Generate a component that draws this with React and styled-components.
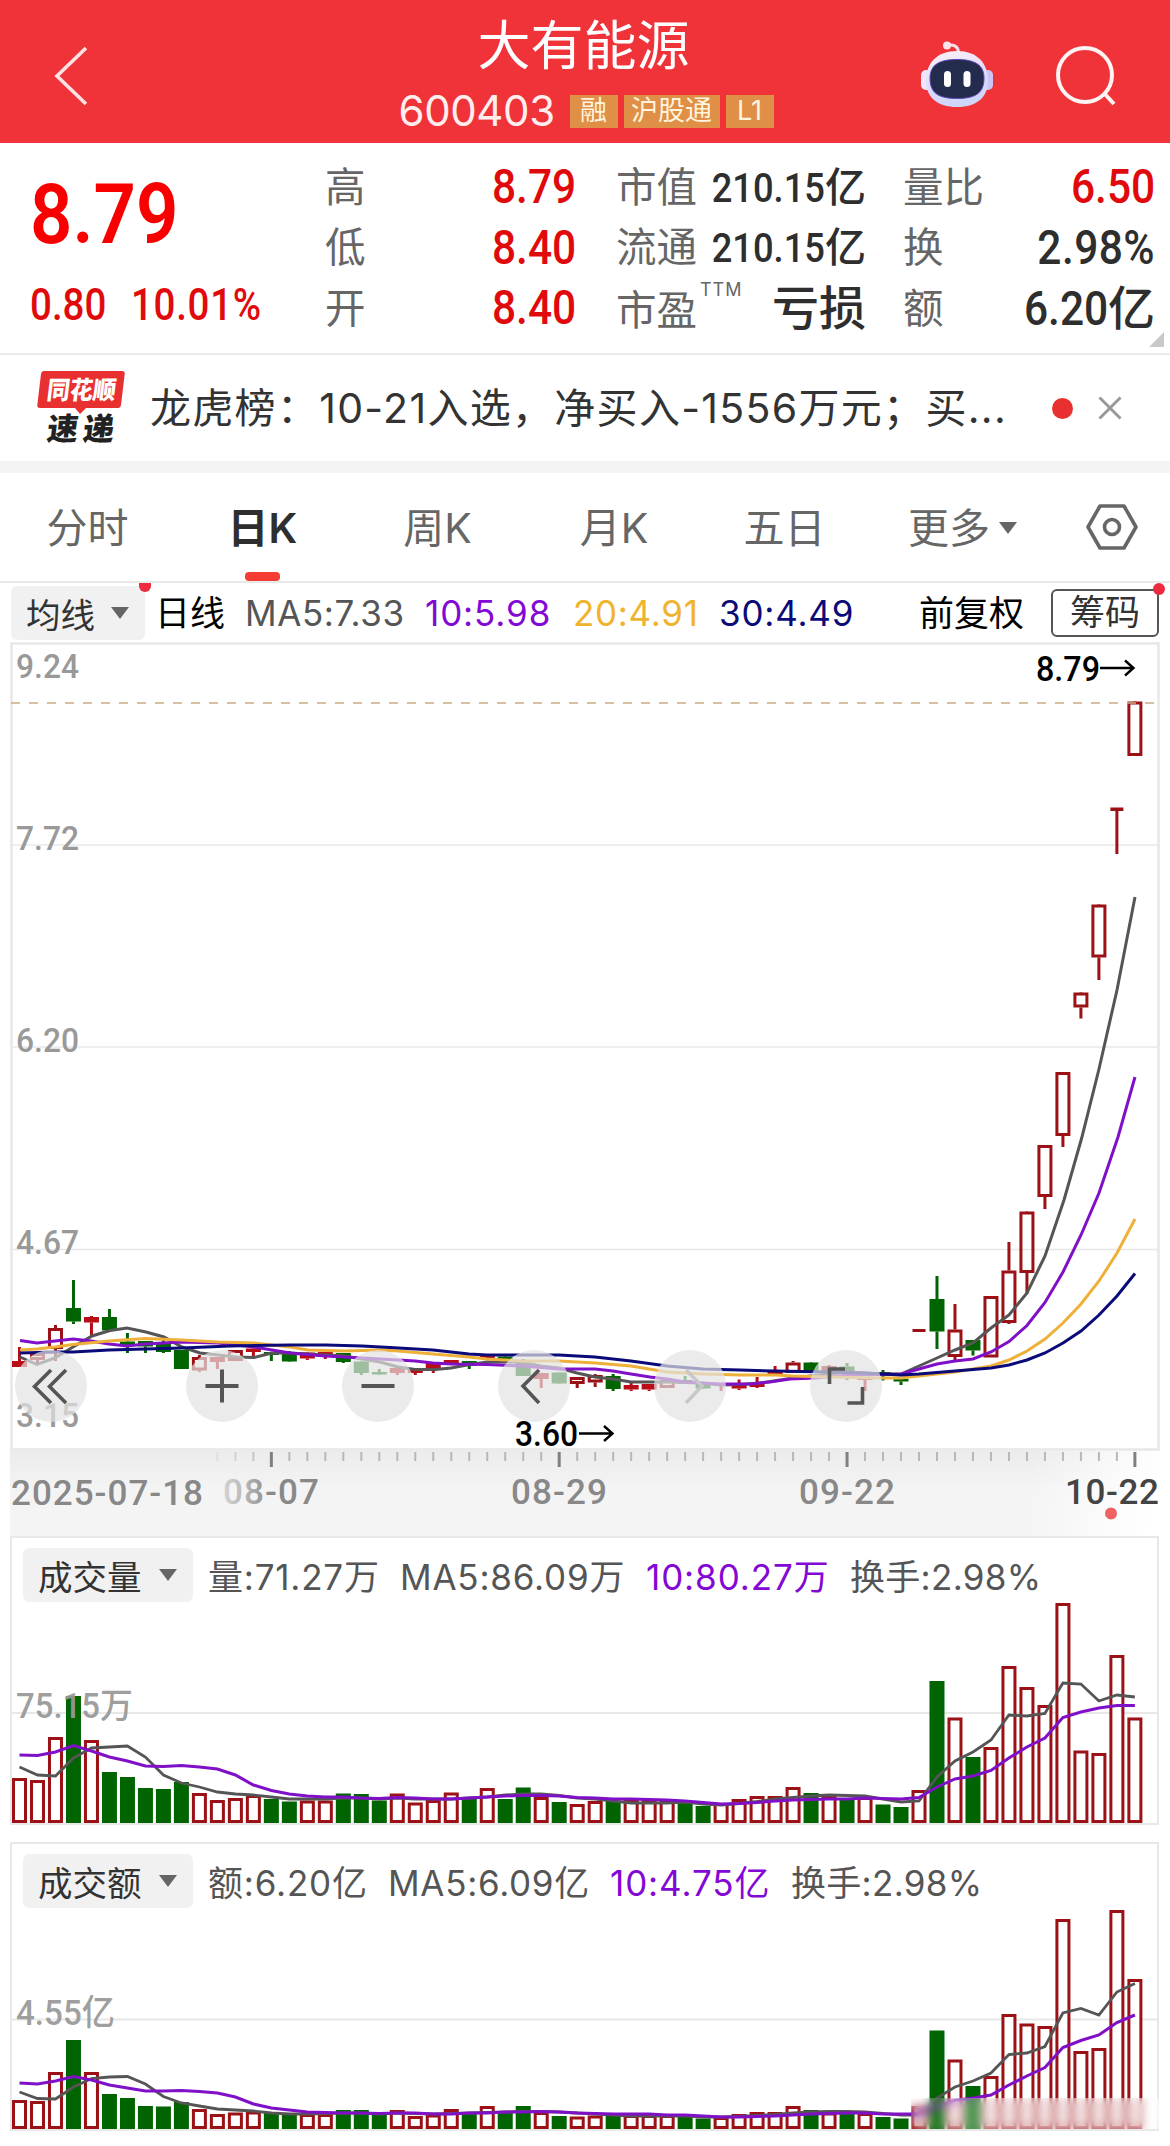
import React from "react";
import styled, { createGlobalStyle } from "styled-components";

const GlobalStyle = createGlobalStyle`
  body {
    margin: 0;
    background: #fff;
    font-family: Inter, "Noto Sans CJK SC", sans-serif;
    color: #333;
  }

  * {
    box-sizing: border-box;
  }
`;

const Page = styled.div`
  width: 1170px;
  height: 2146px;
  overflow: hidden;
  background: #fff;
`;

/* header */

const Header = styled.header`
  display: grid;
  grid-template-columns: 1fr auto 1fr;
  height: 143px;
  background: #f03239;
  color: #fff;
`;

const BackButton = styled.div`
  padding: 45px 0 0 53px;
`;

const TitleBlock = styled.div`
  display: flex;
  flex-direction: column;
  align-items: center;
`;

const Title = styled.h1`
  margin: 12px 3px 0 0;
  font-size: 53px;
  line-height: 68px;
  font-weight: 400;
`;

const CodeRow = styled.div`
  display: flex;
  align-items: center;
  gap: 6px;
  height: 34px;
  margin: 14px 0 0 2px;
`;

const Code = styled.span`
  width: 165px;
  font-size: 42px;
  line-height: 34px;
  letter-spacing: -0.4px;
  color: #ffeeee;
`;

const Tag = styled.span`
  width: ${(props) => props.w}px;
  height: 33px;
  background: #e08f47;
  color: #fff4dd;
  font-size: 27px;
  line-height: 32px;
  text-align: center;
`;

const HeaderIcons = styled.div`
  display: flex;
  justify-content: flex-end;
  gap: 63px;
  padding: 41px 52px 0 0;
`;

/* quote */

const Quote = styled.section`
  position: relative;
  display: flex;
  height: 212px;
  padding: 14px 15px 0 30px;
  border-bottom: 2px solid #ebebeb;
`;

const Num = styled.span`
  display: inline-block;
  font-family: Roboto, "Noto Sans CJK SC", sans-serif;
  font-weight: ${(props) => props.weight || 500};
  font-size: ${(props) => props.size || 48}px;
  letter-spacing: ${(props) => props.track || 0}px;
  transform: scaleX(0.885);
  transform-origin: ${(props) => props.origin || "right"} center;
`;

const PriceBlock = styled.div`
  width: 295px;
  color: #ee0505;
`;

const BigPrice = styled.div`
  margin-top: 14px;
  height: 88px;
  line-height: 88px;
  color: #f90000;
`;

const Change = styled.div`
  display: flex;
  margin-top: 15px;
  line-height: 64px;
  color: #e00a0c;
`;

const ChangeAmount = styled.span`
  width: 101px;
`;

const QuoteCol = styled.div`
  width: ${(props) => props.w}px;
  margin-right: ${(props) => props.gap || 0}px;
`;

const QuoteRow = styled.div`
  display: flex;
  align-items: center;
  justify-content: space-between;
  height: 60.5px;
`;

const Label = styled.span`
  position: relative;
  padding-top: ${(props) => props.drop || 1}px;
  font-size: 40.5px;
  line-height: 60px;
  color: #666;
`;

const Ttm = styled.sup`
  position: absolute;
  left: 84px;
  top: 4px;
  font-size: 18px;
  line-height: 22px;
  letter-spacing: 1px;
`;

const Value = styled.span`
  display: flex;
  align-items: baseline;
  line-height: 60px;
  color: ${(props) => (props.up ? "#e00a0c" : "#2e2e2e")};
`;

const Unit = styled.span`
  font-size: ${(props) => props.size}px;
  font-weight: 500;
  line-height: 60px;
`;

const Corner = styled.i`
  position: absolute;
  right: 6px;
  bottom: 6px;
  border-left: 15px solid transparent;
  border-bottom: 15px solid #c9c9c9;
`;

/* news */

const News = styled.section`
  display: flex;
  align-items: center;
  height: 106px;
  padding-left: 36px;
`;

const NewsText = styled.p`
  width: 902px;
  margin: 0 0 0 24px;
  font-size: 41px;
  line-height: 60px;
  letter-spacing: 1.3px;
  color: #333;
  white-space: nowrap;
`;

const RedDot = styled.i`
  width: 21px;
  height: 21px;
  margin-right: 25px;
  border-radius: 50%;
  background: #e93030;
`;

const Gap = styled.div`
  height: 12px;
  background: #f4f4f4;
`;

/* tabs */

const Tabs = styled.nav`
  display: flex;
  height: 110px;
  padding-left: 15px;
  border-bottom: 2px solid #e9e9e9;
`;

const Tab = styled.div`
  display: flex;
  flex-direction: column;
  align-items: center;
  width: ${(props) => props.w}px;
  padding-top: 25px;
  font-size: 41px;
  line-height: 60px;
  font-weight: ${(props) => (props.active ? 600 : 400)};
  color: ${(props) => (props.active ? "#2e2e2e" : "#666")};
`;

const Underline = styled.i`
  width: 35px;
  height: 9px;
  margin-top: 14px;
  border-radius: 4px;
  background: #f53d33;
`;

const MoreTab = styled.div`
  display: flex;
  align-items: center;
  gap: 9px;
  width: 177px;
  height: 60px;
  margin: 25px 0 0 57px;
  font-size: 41px;
  line-height: 60px;
  color: #666;
`;

const Caret = styled.i`
  border-left: 9px solid transparent;
  border-right: 9px solid transparent;
  border-top: 12px solid #666;
`;

const SettingIcon = styled.svg`
  margin-top: 30px;
`;

/* legends */

const LegendRow = styled.div`
  display: flex;
  align-items: center;
  height: ${(props) => props.h}px;
  padding: ${(props) => props.top || 0}px 0 0 11px;
`;

const Pill = styled.div`
  position: relative;
  display: flex;
  align-items: center;
  justify-content: space-between;
  flex: none;
  width: ${(props) => props.w}px;
  height: 54px;
  margin-right: ${(props) => props.gap}px;
  padding: 0 16px 0 15px;
  border-radius: 6px;
  background: #f1f1f1;
  font-size: 34.5px;
  color: #333;
`;

const PillDot = styled.i`
  position: absolute;
  right: ${(props) => props.right}px;
  top: ${(props) => props.top}px;
  width: 12px;
  height: ${(props) => props.h || 12}px;
  border-radius: ${(props) => (props.h ? "0 0 6px 6px" : "6px")};
  background: #ee2a40;
`;

const Legend = styled.span`
  flex: none;
  width: ${(props) => props.w}px;
  padding-top: ${(props) => props.drop || 0}px;
  font-size: 35px;
  line-height: 50px;
  letter-spacing: ${(props) => props.track || 0}px;
  color: ${(props) => props.color || "#555"};
  white-space: nowrap;
`;

const ChipButton = styled.div`
  position: relative;
  width: 108px;
  height: 48px;
  border: 2px solid #555;
  border-radius: 6px;
  font-size: 35px;
  line-height: 43px;
  text-align: center;
  color: #333;
`;

/* charts */

const ChartArea = styled.div`
  position: relative;
  width: 1150px;
  height: 809px;
  margin-left: 10px;
`;

const Plot = styled.svg`
  display: block;
  overflow: visible;
`;

const RoundButton = styled.div`
  position: absolute;
  left: ${(props) => props.x}px;
  top: 708px;
  width: 72px;
  height: 72px;
  border-radius: 50%;
  background: rgba(226, 226, 226, 0.7);

  svg {
    display: block;
  }
`;

const Axis = styled.div`
  height: 85px;
  margin-left: 10px;
  width: 1150px;
  background: linear-gradient(100deg, rgba(255, 255, 255, 0) 88%, #fff 99%),
    linear-gradient(#ececec, #f4f4f4 45%);
`;

const Panel = styled.section`
  position: relative;
  width: 1149px;
  height: 289px;
  margin: 0 0 17px 10px;
  border: 2px solid #e8e8e8;
`;

const Watermark = styled.div`
  position: absolute;
  right: -2px;
  bottom: 0;
  width: 248px;
  height: 31px;
  background: linear-gradient(90deg, rgba(255, 255, 255, 0), rgba(255, 255, 255, 0.3) 25%);
  backdrop-filter: blur(4px);
`;

const FONT = 'Roboto, "Noto Sans CJK SC", sans-serif';
const RED = "#9c1116";
const GREEN = "#006400";
const GRAY = "#555";
const PURPLE = "#8010c8";
const ORANGE = "#efb03a";
const NAVY = "#0a0a78";

const STEP = 17.99;
const xAt = (i) => 19.5 + i * STEP;

// kind, body top, body bottom, high, low
const candles = [
  ["s", 1361, 1367, 1347, 1367], ["r", 1353, 1360, 1352, 1363], ["r", 1328, 1349, 1325, 1361],
  ["g", 1308, 1321.5, 1280, 1324], ["s", 1317, 1322.5, 1316, 1337], ["g", 1317, 1330.5, 1309, 1331],
  ["g", 1341.5, 1346, 1333, 1353], ["g", 1341, 1346.5, 1341, 1353], ["g", 1343, 1352, 1340, 1353],
  ["g", 1350, 1369, 1350, 1369], ["r", 1357, 1370.5, 1355, 1372], ["s", 1357, 1362, 1357, 1369],
  ["r", 1350, 1361, 1350, 1361], ["s", 1348.5, 1352, 1348, 1357], ["g", 1352, 1355, 1352, 1361],
  ["g", 1352, 1361.5, 1351, 1362], ["s", 1352.5, 1358.5, 1352, 1360], ["s", 1352, 1357, 1352, 1359],
  ["g", 1353, 1362, 1353, 1363], ["g", 1361.5, 1373, 1361, 1375], ["g", 1372, 1374.5, 1369, 1375],
  ["s", 1368, 1373, 1366, 1375], ["s", 1368, 1373, 1368, 1375], ["s", 1363, 1368, 1363, 1373],
  ["s", 1360, 1364, 1360, 1364], ["g", 1361, 1366, 1361, 1369], ["s", 1355, 1359, 1355, 1359],
  ["g", 1356.5, 1360, 1356, 1360], ["g", 1363, 1376, 1359, 1376], ["s", 1373, 1379, 1373, 1388],
  ["g", 1372.5, 1383.5, 1372, 1384], ["r", 1377, 1384, 1377, 1388], ["r", 1375, 1382.5, 1374, 1387],
  ["g", 1376, 1389, 1374, 1391], ["s", 1385, 1389.5, 1382, 1391], ["s", 1384, 1389.5, 1384, 1391],
  ["r", 1380, 1388, 1380, 1388], ["g", 1380, 1384, 1376, 1384], ["g", 1384, 1388.5, 1384, 1389],
  ["s", 1383, 1386, 1383, 1391], ["s", 1385, 1388.5, 1379.5, 1390], ["s", 1384, 1387, 1377, 1388],
  ["s", 1372, 1374.5, 1366, 1375], ["r", 1362.5, 1373, 1361, 1373], ["g", 1362.5, 1372, 1362, 1372],
  ["r", 1366, 1372, 1365, 1372], ["g", 1366.5, 1372, 1363, 1380], ["s", 1377, 1380, 1377, 1391],
  ["g", 1372, 1376, 1370, 1380.5], ["g", 1379, 1381.5, 1379, 1385], ["d", 1329, 1332, 1329, 1332],
  ["g", 1299, 1331.5, 1276, 1349], ["r", 1329.5, 1357, 1304, 1362], ["g", 1340, 1350.5, 1340, 1355.5],
  ["r", 1296, 1357.5, 1296, 1357], ["r", 1270.5, 1323, 1242, 1324], ["r", 1211.5, 1273, 1211, 1294],
  ["r", 1145, 1197, 1145, 1209], ["r", 1072, 1136, 1072, 1147], ["r", 992.5, 1007.5, 992, 1018.5],
  ["r", 904.5, 957.5, 904, 980], ["d", 807.5, 811, 808, 854], ["r", 701.5, 756, 701, 756],
];

const priceMa = [
  {
    color: GRAY,
    points:
      "20,1357 37,1364.5 55,1358 73,1347 92,1336 110,1330.5 127,1328 146,1332 164,1337 182,1347 200,1353 218,1355 236,1357 254,1357.5 272,1353 290,1353 326,1355 344,1356 362,1359 380,1362 398,1367 415,1369.5 435,1369.5 451,1368 470,1364.5 487,1362 520,1362 541,1366 559,1368 577,1373 595,1377 613,1379 631,1382 670,1382 700,1383 720,1385 740,1384.5 760,1383 780,1380 793,1378 820,1375 847,1372 883,1374 901,1374 919,1366 937,1358 955,1350 973,1343 991,1328 1009,1315 1027,1293 1045,1256 1064,1200 1081.7,1138 1099,1069 1117,990 1135,897",
  },
  {
    color: PURPLE,
    points:
      "20,1340.5 37,1343 55,1341 73,1339 91,1341 109,1344 127,1346 145,1344 163,1343 182,1342 218,1343 254,1347 272,1350 290,1353 325,1356 344,1357 362,1358 398,1360 415,1361 433,1363 451,1364 487,1364.5 523,1366 559,1369 595,1369 613,1371 631,1374 650,1377 667,1379 685,1382 720,1384 750,1384 770,1382 790,1379 815,1378 850,1375 901,1374 919,1369 937,1364 955,1361 973,1359 991,1352 1009,1341.5 1027,1325.5 1045,1302.5 1063,1272 1081,1235 1099,1193 1118,1137 1135,1077",
  },
  {
    color: ORANGE,
    points:
      "20,1350 37,1349 55,1347 73,1344.5 109,1341 145,1338.5 182,1340 218,1342 254,1343 290,1347 308,1350 344,1351 380,1350 398,1351 433,1354 469,1357 487,1359 523,1361 559,1361 595,1363 631,1366 667,1372 703,1374 740,1375 775,1375 793,1376 829,1377 883,1378 901,1378 919,1376 955,1372 973,1369 991,1366 1009,1360 1027,1351 1045,1339 1063,1323 1081,1304 1099,1281 1117,1253 1135,1219",
  },
  {
    color: NAVY,
    points:
      "20,1353 55,1352 73,1352 109,1350 145,1349 182,1348 230,1346 290,1345 326,1345 362,1346 390,1347.5 433,1350 469,1354 487,1355 559,1355 595,1357 631,1361 667,1366 703,1369 740,1370 775,1371 829,1372 865,1373 901,1375 919,1374 955,1371 991,1368 1009,1365 1027,1360 1045,1353 1063,1343 1081,1331 1099,1315 1117,1296 1135,1273.5",
  },
];

// r = hollow red bar, g = filled green bar
const barKinds = "rrrgrgggggrrrrggrrgggrrrrgrggrgrrgrrrggrrrrrgrgrggrgrgrrrrrrrrr";

const volume = {
  bottom: 1823,
  tops: [
    1778, 1780, 1737, 1696, 1740, 1772, 1777, 1788, 1789, 1782, 1793, 1800, 1798, 1795, 1799, 1801.5,
    1800.5, 1800.5, 1793.5, 1794, 1800.5, 1793.5, 1802.5, 1800, 1792.5, 1799, 1788, 1799, 1787.5, 1797,
    1802, 1804, 1801, 1801, 1799, 1799, 1801, 1801, 1806, 1803, 1799, 1796, 1796, 1787, 1793, 1796,
    1800, 1797, 1804.5, 1807, 1790, 1681, 1717.5, 1757, 1747, 1666, 1687, 1705, 1603, 1750.5, 1753,
    1655, 1717.5,
  ],
  ma5: [
    1767, 1775, 1776, 1758, 1748, 1747, 1746, 1757, 1775, 1783, 1787, 1792, 1794, 1795, 1797, 1799,
    1799, 1799, 1798, 1798, 1799, 1798, 1799, 1799, 1799, 1798, 1797, 1795, 1794, 1794, 1795.5, 1798,
    1799, 1801, 1803, 1803, 1803, 1802, 1804, 1805, 1803.5, 1801.5, 1799, 1797.5, 1796, 1795, 1795.5,
    1796, 1799, 1802, 1801, 1777, 1761, 1752, 1740, 1715, 1716, 1713.5, 1683, 1684, 1701, 1695, 1697,
  ],
  ma10: [
    1755, 1755.5, 1752, 1745.5, 1751, 1757, 1761, 1766, 1766.5, 1765.5, 1767, 1769, 1775, 1785, 1790.5,
    1794, 1796, 1797, 1797, 1798, 1798.5, 1797.5, 1798, 1799, 1799, 1798, 1797, 1796, 1795.5, 1795.5,
    1796, 1797.5, 1798, 1799, 1799, 1799.5, 1800, 1801, 1802.5, 1804, 1803.5, 1802.5, 1801, 1800,
    1799.5, 1799, 1799, 1798, 1798.5, 1799, 1797.5, 1787, 1779, 1776, 1770.5, 1758, 1747, 1738, 1717.5,
    1712, 1708, 1705.5, 1705.5,
  ],
};

const amount = {
  bottom: 2129,
  tops: [
    2100, 2101, 2072, 2040, 2072, 2094, 2098, 2106, 2106.5, 2102, 2109, 2114, 2112.5, 2111.5, 2113,
    2114.5, 2114, 2114, 2110, 2110, 2114, 2110, 2116, 2114.5, 2109, 2113.5, 2106, 2112.5, 2106, 2112,
    2116, 2116.5, 2115.5, 2115.5, 2115, 2115, 2115, 2116, 2118.5, 2117, 2114, 2112, 2112, 2106, 2110,
    2112.5, 2114, 2113, 2117, 2118.5, 2106, 2030.5, 2059.5, 2086, 2076, 2014, 2023.5, 2026, 1919, 2051,
    2048, 1910, 1979,
  ],
  ma5: [
    2092, 2098.5, 2099, 2087, 2078.5, 2077, 2076.5, 2084, 2096.5, 2103, 2106, 2109, 2110, 2111, 2113,
    2114, 2114, 2113.5, 2113, 2113, 2114, 2113, 2113.5, 2114, 2113.5, 2113, 2112.5, 2112, 2111.5,
    2111.5, 2112, 2113, 2114, 2115, 2116, 2116, 2116, 2116, 2117, 2117, 2116.5, 2115.5, 2114.5, 2113,
    2112, 2111.5, 2111.5, 2112, 2113.5, 2115, 2115, 2098, 2087, 2081, 2073, 2054.5, 2053, 2046.5, 2013,
    2008.5, 2015, 1992, 1983.5,
  ],
  ma10: [
    2083, 2084, 2081, 2076.5, 2080, 2085, 2088, 2091, 2091, 2090.5, 2091.5, 2093, 2097, 2104, 2108,
    2110, 2112, 2112.5, 2113, 2113, 2113.5, 2113, 2113, 2114, 2114, 2113, 2113, 2112, 2112, 2111.5,
    2112, 2113, 2113.5, 2114, 2114, 2114, 2115, 2115, 2116, 2117, 2117, 2116.5, 2116, 2115, 2114,
    2113.5, 2113, 2113, 2114, 2114, 2114, 2107, 2100.5, 2098, 2095, 2085, 2076, 2067.5, 2047.5, 2040.5,
    2035, 2022.5, 2015,
  ],
};

const toPoints = (ys) => ys.map((y, i) => `${xAt(i).toFixed(1)},${y}`).join(" ");

function Candle({ x, kind, top, bottom, high, low }) {
  if (kind === "d") {
    return (
      <g fill={RED}>
        <rect x={x - 6.5} y={top} width="13" height={bottom - top} />
        <rect x={x - 1.5} y={high} width="3" height={low - high} />
      </g>
    );
  }
  const color = kind === "g" ? GREEN : kind === "s" ? "#b80c16" : RED;
  return (
    <g fill={color}>
      <rect x={x - 1.5} y={high} width="3" height={Math.max(top - high, 0)} />
      <rect x={x - 1.5} y={bottom} width="3" height={Math.max(low - bottom, 0)} />
      {kind === "r" ? (
        <rect
          x={x - 6}
          y={top + 1.5}
          width="12"
          height={bottom - top - 3}
          fill="none"
          stroke={color}
          strokeWidth="3"
        />
      ) : (
        <rect x={x - 7.5} y={top} width="15" height={bottom - top} />
      )}
    </g>
  );
}

function Bars({ data, top, mid, label, labelWidth, height }) {
  return (
    <Plot width="1149" height={height} viewBox={`12 ${top} 1149 ${height}`}>
      <line x1="11" x2="1158" y1={mid} y2={mid} stroke="#e8e8e8" strokeWidth="2" />
      {data.tops.map((y, i) =>
        barKinds[i] === "g" ? (
          <rect key={i} x={xAt(i) - 7.5} y={y} width="15" height={data.bottom - y} fill={GREEN} />
        ) : (
          <rect
            key={i}
            x={xAt(i) - 6}
            y={y + 1.5}
            width="12"
            height={data.bottom - y - 3}
            fill="#fff"
            stroke={RED}
            strokeWidth="3"
          />
        )
      )}
      <text
        x="16"
        y={mid + 5}
        fontFamily={FONT}
        fontSize="35"
        fontWeight="500"
        fill="#999"
        fillOpacity="0.95"
        textLength={labelWidth}
        lengthAdjust="spacingAndGlyphs"
      >
        {label}
      </text>
      <polyline points={toPoints(data.ma5)} fill="none" stroke={GRAY} strokeWidth="2.8" />
      <polyline points={toPoints(data.ma10)} fill="none" stroke={PURPLE} strokeWidth="3" />
    </Plot>
  );
}

const priceLabels = [
  ["9.24", 678],
  ["7.72", 849.5],
  ["6.20", 1052],
  ["4.67", 1254],
  ["3.15", 1426.5],
];

function PriceChart() {
  return (
    <ChartArea>
      <Plot width="1150" height="809" viewBox="10 642 1150 809">
        <rect x="11.5" y="643.5" width="1147" height="806" fill="none" stroke="#e8e8e8" strokeWidth="2.6" />
        {[845, 1047, 1249.5].map((y) => (
          <line key={y} x1="11" x2="1158" y1={y} y2={y} stroke="#e8e8e8" strokeWidth="1.6" />
        ))}
        {priceLabels.map(([label, y]) => (
          <text
            key={label}
            x="16"
            y={y}
            fontFamily={FONT}
            fontSize="34"
            fontWeight="500"
            fill="#999"
            textLength="63"
            lengthAdjust="spacingAndGlyphs"
          >
            {label}
          </text>
        ))}
        {candles.map(([kind, top, bottom, high, low], i) => (
          <Candle key={i} x={xAt(i)} kind={kind} top={top} bottom={bottom} high={high} low={low} />
        ))}
        <line x1="11" x2="1154" y1="703" y2="703" stroke="#c9ac82" strokeWidth="1.6" strokeDasharray="9 9" />
        {priceMa.map((line) => (
          <polyline key={line.color} points={line.points} fill="none" stroke={line.color} strokeWidth="3" />
        ))}
        <g fontFamily={FONT} fontSize="35" fontWeight="500" fill="#000">
          <text x="1036" y="681" textLength="64" lengthAdjust="spacingAndGlyphs">8.79</text>
          <text x="515" y="1446" textLength="63" lengthAdjust="spacingAndGlyphs">3.60</text>
        </g>
        <g fill="none" stroke="#000" strokeWidth="2.4">
          <path d="M1100 668h33M1125 660.5l8.500 7.500-8.500 7.500" />
          <path d="M579 1433.500h33M604 1426l8.500 7.500-8.500 7.500" />
        </g>
      </Plot>
      <RoundButton x={5}>
        <svg width="72" height="72" fill="none" stroke="#555" strokeWidth="3.6">
          <path d="M36 20L19.500 36.500L36 53M51 20L34.500 36.500L51 53" />
        </svg>
      </RoundButton>
      <RoundButton x={176}>
        <svg width="72" height="72" fill="none" stroke="#555" strokeWidth="4">
          <path d="M36 19.500v33M19.500 36h33" />
        </svg>
      </RoundButton>
      <RoundButton x={332}>
        <svg width="72" height="72" fill="none" stroke="#555" strokeWidth="4">
          <path d="M19.500 36h33" />
        </svg>
      </RoundButton>
      <RoundButton x={488}>
        <svg width="72" height="72" fill="none" stroke="#555" strokeWidth="3.6">
          <path d="M41 20L25 36L41 53" />
        </svg>
      </RoundButton>
      <RoundButton x={644}>
        <svg width="72" height="72" fill="none" stroke="#c8c8c8" strokeWidth="3.6">
          <path d="M32 20L48 36L32 53" />
        </svg>
      </RoundButton>
      <RoundButton x={800}>
        <svg width="72" height="72" fill="none" stroke="#555" strokeWidth="3.6">
          <path d="M35 19H19.500V34M37.500 53H52.500V37" />
        </svg>
      </RoundButton>
    </ChartArea>
  );
}

function DateAxis() {
  const ticks = [];
  for (let i = 11; i <= 62; i++) {
    const major = [14, 30, 46, 62].includes(i);
    const opacity = i < 14 ? (i - 10) * 0.25 : 1;
    ticks.push(
      <rect
        key={i}
        x={xAt(i) - (major ? 1.5 : 1)}
        y="1452"
        width={major ? 3 : 2}
        height={major ? 15 : 9}
        fill={major ? "#808080" : "#b8b8b8"}
        opacity={opacity}
      />
    );
  }
  return (
    <Axis>
      <Plot width="1150" height="85" viewBox="10 1451 1150 85">
        <defs>
          <linearGradient id="fade">
            <stop offset="0" stopColor="#888" stopOpacity="0.3" />
            <stop offset="0.25" stopColor="#888" stopOpacity="0.6" />
            <stop offset="0.5" stopColor="#888" />
          </linearGradient>
        </defs>
        {ticks}
        <g fontFamily={FONT} fontSize="35" fontWeight="500" fill="#888">
          <text x="11" y="1505" textLength="192">2025-07-18</text>
          <text x="223" y="1504" textLength="96" fill="url(#fade)">08-07</text>
          <text x="511" y="1504" textLength="96">08-29</text>
          <text x="799" y="1504" textLength="96">09-22</text>
          <text x="1065" y="1504" textLength="94" fill="#444">10-22</text>
        </g>
        <circle cx="1111" cy="1513.500" r="6" fill="#f06262" />
      </Plot>
    </Axis>
  );
}

function RobotIcon() {
  return (
    <svg width="72" height="66" viewBox="0 0 72 66">
      <defs>
        <linearGradient id="shell" x1="0" y1="0" x2="0.3" y2="1">
          <stop offset="0" stopColor="#fdf3f8" />
          <stop offset="0.55" stopColor="#e3dcfa" />
          <stop offset="1" stopColor="#cfd6fb" />
        </linearGradient>
      </defs>
      <path d="M26 4.500C32 3 37 5 37.500 11" fill="none" stroke="#f6dfe8" strokeWidth="3" />
      <circle cx="26" cy="4.500" r="4" fill="#fbe6ee" />
      <rect x="0" y="29" width="12" height="20" rx="5" fill="#efe6fb" />
      <rect x="60" y="29" width="12" height="20" rx="5" fill="#c9c6f6" />
      <path d="M36 10C56 10 67 22 67 40C67 56 56 66 36 66C16 66 5 56 5 40C5 22 16 10 36 10Z" fill="url(#shell)" />
      <path
        d="M36 18.500C54 18.500 63 24 63 37C63 51 56 57.500 36 57.500C16 57.500 9 51 9 37C9 24 18 18.500 36 18.500Z"
        fill="#242c4d"
        stroke="#5a48b8"
        strokeWidth="1"
      />
      <rect x="23" y="30" width="7" height="16" rx="3.500" fill="#fff" />
      <rect x="42.500" y="30" width="7" height="16" rx="3.500" fill="#fff" />
    </svg>
  );
}

function NewsLogo() {
  return (
    <Plot width="90" height="76" viewBox="36 370 90 76">
      <path d="M44 371H122Q125 371 124.700 374L121 405Q120.500 408 118 408H86L80 414L75 408H40Q37 408 37.300 405L41 374Q41.500 371 44 371Z" fill="#e93030" />
      <g fontFamily='"Noto Sans CJK SC", sans-serif' fontWeight="900">
        <text transform="translate(46 399) skewX(-7)" fontSize="25" fill="#fff" textLength="69" lengthAdjust="spacingAndGlyphs">
          同花顺
        </text>
        <text transform="translate(46 440) skewX(-7)" fontSize="31" fill="#222" textLength="67">
          速递
        </text>
      </g>
    </Plot>
  );
}

export default function App() {
  return (
    <Page>
      <GlobalStyle />
      <Header>
        <BackButton>
          <svg width="36" height="62" fill="none" stroke="#ffe3e3" strokeWidth="3.6">
            <path d="M33 3L4 31L33 59" />
          </svg>
        </BackButton>
        <TitleBlock>
          <Title>大有能源</Title>
          <CodeRow>
            <Code>600403</Code>
            <Tag w={48}>融</Tag>
            <Tag w={96}>沪股通</Tag>
            <Tag w={48}>L1</Tag>
          </CodeRow>
        </TitleBlock>
        <HeaderIcons>
          <RobotIcon />
          <svg width="62" height="66" fill="none" stroke="#fff3f3" strokeWidth="4">
            <circle cx="29" cy="34" r="27" />
            <path d="M48 52L58 63" />
          </svg>
        </HeaderIcons>
      </Header>

      <Quote>
        <PriceBlock>
          <BigPrice>
            <Num size={84} weight={600} origin="left">8.79</Num>
          </BigPrice>
          <Change>
            <ChangeAmount>
              <Num size={43.5} origin="left">0.80</Num>
            </ChangeAmount>
            <Num size={43.5} track={0.8} origin="left">10.01%</Num>
          </Change>
        </PriceBlock>
        <QuoteCol w={251} gap={40}>
          <QuoteRow>
            <Label>高</Label>
            <Value up><Num>8.79</Num></Value>
          </QuoteRow>
          <QuoteRow>
            <Label>低</Label>
            <Value up><Num>8.40</Num></Value>
          </QuoteRow>
          <QuoteRow>
            <Label>开</Label>
            <Value up><Num>8.40</Num></Value>
          </QuoteRow>
        </QuoteCol>
        <QuoteCol w={250} gap={37}>
          <QuoteRow>
            <Label>市值</Label>
            <Value><Num size={41}>210.15</Num><Unit size={41}>亿</Unit></Value>
          </QuoteRow>
          <QuoteRow>
            <Label>流通</Label>
            <Value><Num size={41}>210.15</Num><Unit size={41}>亿</Unit></Value>
          </QuoteRow>
          <QuoteRow>
            <Label drop={6}>市盈<Ttm>TTM</Ttm></Label>
            <Value><Unit size={47}>亏损</Unit></Value>
          </QuoteRow>
        </QuoteCol>
        <QuoteCol w={252}>
          <QuoteRow>
            <Label>量比</Label>
            <Value up><Num>6.50</Num></Value>
          </QuoteRow>
          <QuoteRow>
            <Label>换</Label>
            <Value><Num track={0.5}>2.98%</Num></Value>
          </QuoteRow>
          <QuoteRow>
            <Label>额</Label>
            <Value><Num>6.20</Num><Unit size={47}>亿</Unit></Value>
          </QuoteRow>
        </QuoteCol>
        <Corner />
      </Quote>

      <News>
        <NewsLogo />
        <NewsText>龙虎榜：10-21入选，净买入-1556万元；买...</NewsText>
        <RedDot />
        <svg width="24" height="24" fill="none" stroke="#999" strokeWidth="3">
          <path d="M1.500 1.500L22.500 22.500M22.500 1.500L1.500 22.500" />
        </svg>
      </News>
      <Gap />

      <Tabs>
        <Tab w={145}>分时</Tab>
        <Tab w={205} active>
          日K
          <Underline />
        </Tab>
        <Tab w={145}>周K</Tab>
        <Tab w={208}>月K</Tab>
        <Tab w={133}>五日</Tab>
        <MoreTab>
          更多
          <Caret />
        </MoreTab>
        <SettingIcon width="54" height="48" fill="none" stroke="#666" strokeWidth="3.6">
          <path d="M15 3H39L51 24L39 45H15L3 24Z" strokeLinejoin="round" />
          <circle cx="27" cy="24" r="7.500" />
        </SettingIcon>
      </Tabs>

      <LegendRow h={59}>
        <Pill w={134} gap={10}>
          均线
          <Caret />
          <PillDot right={-6} top={-3} h={9} />
        </Pill>
        <Legend w={90} color="#000">日线</Legend>
        <Legend w={180} track={0.6}>MA5:7.33</Legend>
        <Legend w={148} track={0.9} color="#8408d4">10:5.98</Legend>
        <Legend w={146} track={0.7} color="#efb32e">20:4.91</Legend>
        <Legend w={200} track={0.8} color={NAVY}>30:4.49</Legend>
        <Legend w={132} color="#000">前复权</Legend>
        <ChipButton>
          筹码
          <PillDot right={-8} top={-8} />
        </ChipButton>
      </LegendRow>

      <PriceChart />
      <DateAxis />

      <Panel>
        <LegendRow h={64} top={9}>
          <Pill w={170} gap={15}>
            成交量
            <Caret />
          </Pill>
          <Legend w={192} drop={5} track={0.8}>量:71.27万</Legend>
          <Legend w={246} drop={5} track={0.8}>MA5:86.09万</Legend>
          <Legend w={204} drop={5} track={0.9} color="#8408d4">10:80.27万</Legend>
          <Legend w={190} drop={5} track={0.3}>换手:2.98%</Legend>
        </LegendRow>
        <Bars data={volume} top={1602} height={221} mid={1713} label="75.15万" labelWidth={117} />
      </Panel>

      <Panel>
        <LegendRow h={64} top={9}>
          <Pill w={170} gap={15}>
            成交额
            <Caret />
          </Pill>
          <Legend w={180} drop={5} track={0.8}>额:6.20亿</Legend>
          <Legend w={222} drop={5} track={0.7}>MA5:6.09亿</Legend>
          <Legend w={181} drop={5} track={0.9} color="#8408d4">10:4.75亿</Legend>
          <Legend w={190} drop={5} track={0.3}>换手:2.98%</Legend>
        </LegendRow>
        <Bars data={amount} top={1908} height={221} mid={2019.5} label="4.55亿" labelWidth={99} />
        <Watermark />
      </Panel>
    </Page>
  );
}
